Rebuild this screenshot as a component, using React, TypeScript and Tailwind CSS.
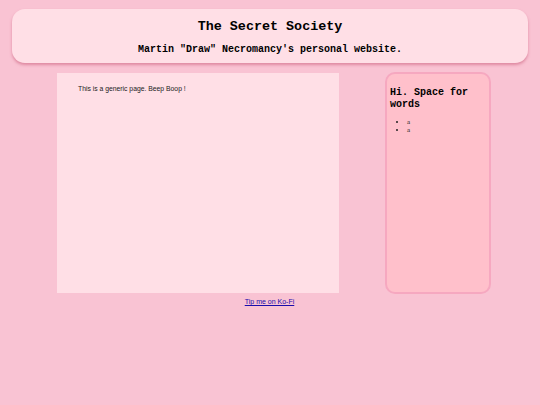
import React from "react";

export default function App() {
  return (
    <div className="min-h-[405px] w-[540px] bg-[#f9c3d3] pt-[9px]" style={{ fontFamily: '"Liberation Sans", Arial, sans-serif' }}>
      <header className="mx-[12px] h-[54px] rounded-[13px] bg-[#ffdfe6] shadow-[0_2px_3px_rgba(200,90,120,0.55)] flex flex-col items-center" style={{ fontFamily: '"Liberation Mono", "Courier New", monospace' }}>
        <h1 className="mt-[9px] text-[13.4px] leading-[18px] font-bold text-black">The Secret Society</h1>
        <p className="mt-[8px] text-[10px] leading-[12px] font-bold text-black">Martin "Draw" Necromancy's personal website.</p>
      </header>
      <div className="flex mt-[9px] pl-[57px] items-start">
        <main className="mt-[1px] w-[282px] h-[220px] bg-[#ffdfe6] pl-[21px] pt-[11px]">
          <p className="text-[6.8px] leading-[9px] text-[#222]">This is a generic page. Beep Boop !</p>
        </main>
        <aside className="ml-[46px] w-[106px] h-[222px] rounded-[10px] border-2 border-[#f6a8c0] bg-[#ffc0cb] px-[3px] pt-[13px]">
          <h2 className="text-[10px] leading-[12px] font-bold text-black" style={{ fontFamily: '"Liberation Mono", "Courier New", monospace' }}>Hi. Space for words</h2>
          <ul className="mt-[8px] pl-[17px] list-disc text-[7px] leading-[7.5px] text-[#222]" style={{ fontFamily: '"Liberation Serif", "Times New Roman", serif' }}>
            <li>a</li>
            <li>a</li>
          </ul>
        </aside>
      </div>
      <div className="mt-[3px] flex justify-center pr-[1px]">
        <a href="#" className="text-[7px] leading-[9px] underline text-[#1a0dab]">Tip me on Ko-Fi</a>
      </div>
    </div>
  );
}
